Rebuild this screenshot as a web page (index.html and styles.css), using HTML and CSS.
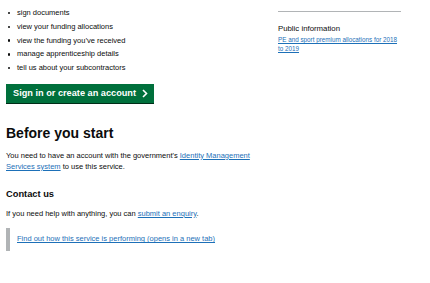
FILE: index.html
```html
<!DOCTYPE html>
<html lang="en">
<head>
  <meta charset="UTF-8" />
  <meta name="viewport" content="width=device-width, initial-scale=1.0"/>
  <title>Manage your education and skills funding</title>
  <link rel="stylesheet" href="styles.css">
</head>
<body>

  <div class="page">
    <main class="main">
      <ul class="task-list">
        <li>sign documents</li>
        <li>view your funding allocations</li>
        <li>view the funding you’ve received</li>
        <li>manage apprenticeship details</li>
        <li>tell us about your subcontractors</li>
      </ul>

      <a class="start-button" href="#">
        Sign in or create an account
        <svg width="6" height="9" viewBox="0 0 6 9">
          <path d="M1 1 L4.5 4.5 L1 8" fill="none" stroke="#fff" stroke-width="1.6"/>
        </svg>
      </a>

      <h2>Before you start</h2>
      <p class="body-text">
        You need to have an account with the government's <a href="#">Identity Management Services system</a> to use this service.
      </p>

      <h3>Contact us</h3>
      <p class="body-text">
        If you need help with anything, you can <a href="#">submit an enquiry</a>.
      </p>

      <div class="inset">
        <a href="#">Find out how this service is performing (opens in a new tab)</a>
      </div>
    </main>

    <aside class="side">
      <h4>Public information</h4>
      <a class="side-link" href="#">PE and sport premium allocations for 2018 to 2019</a>
    </aside>
  </div>

</body>
</html>
```

FILE: styles.css
```css
body {
  margin: 0;
  font-family: "Liberation Sans", Arial, sans-serif;
  color: #0b0c0c;
  background: #fff;
}

a {
  color: #1d70b8;
  text-decoration: underline;
}

.page {
  display: flex;
  padding-left: 6px;
}

.main {
  width: 262px;
}

.task-list {
  list-style: none;
  padding: 0;
  margin: 8px 0 0 0;
}

.task-list li {
  display: flex;
  align-items: center;
  gap: 7px;
  font-size: 7.5px;
  line-height: 10px;
  margin-bottom: 3.75px;
}

.task-list li::before {
  content: "";
  width: 2.5px;
  height: 2.5px;
  border-radius: 50%;
  background: #0b0c0c;
  margin-left: 1.5px;
}

.start-button {
  display: inline-flex;
  align-items: center;
  gap: 6px;
  margin-top: 7px;
  height: 19px;
  padding: 0 6px 0 7px;
  background: #00703c;
  color: #fff;
  font-weight: bold;
  font-size: 9.2px;
  text-decoration: none;
  box-shadow: 0 1px 0 #002d18;
}

h2 {
  font-size: 14px;
  line-height: 17px;
  margin: 22px 0 0 0;
}

.body-text {
  font-size: 7.5px;
  line-height: 11px;
  margin: 8px 0 0 0;
}

h3 {
  font-size: 9.3px;
  line-height: 12px;
  margin: 16px 0 0 0;
}

h3 + .body-text {
  margin-top: 8px;
}

.inset {
  margin-top: 9px;
  border-left: 4px solid #b1b4b6;
  padding: 6.5px 0 6.5px 7px;
  font-size: 7.5px;
  line-height: 10px;
}

.side {
  margin-left: 10px;
  width: 123px;
  border-top: 1px solid #b1b4b6;
  margin-top: 11px;
  align-self: flex-start;
}

.side h4 {
  font-size: 7.8px;
  font-weight: normal;
  line-height: 10px;
  margin: 12px 0 1px 0;
}

.side-link {
  display: block;
  font-size: 6.3px;
  line-height: 9px;
}
```
